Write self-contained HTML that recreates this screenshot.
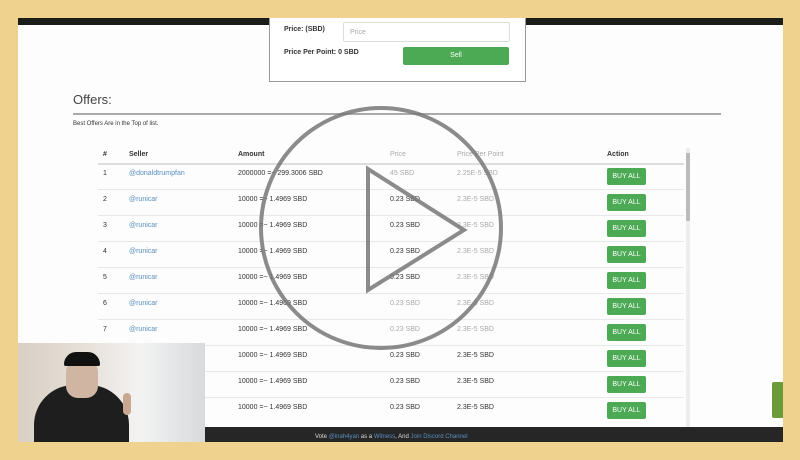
<!DOCTYPE html>
<html><head><style>
body{margin:0;width:800px;height:460px;background:#efd28e;font-family:"Liberation Sans",sans-serif;position:relative;overflow:hidden}
#scr{position:absolute;left:18px;top:18px;width:765px;height:424px;background:#fdfdfd;overflow:hidden}
.abs{position:absolute}
.t{font-size:7px;color:#333;position:absolute}
.btn{position:absolute;left:589px;width:39px;height:17px;background:#4caa55;color:#fff;font-size:7px;text-align:center;line-height:17px;border-radius:2px}
.ln{position:absolute;left:80px;width:586px;height:1px;background:#e8e8e8}
.blue{color:#5a8fc0}
.gray{color:#aaa}
</style></head><body>
<div id="scr">
<div class="abs" style="left:0;top:0;width:765px;height:7px;background:#1b1d1b"></div>
<div class="abs" style="left:251px;top:0;width:255px;height:63px;border:1px solid #999;border-top:none;background:#fff"></div>
<div class="t" style="left:266px;top:8px;font-weight:bold">Price: (SBD)</div>
<div class="abs" style="left:325px;top:4px;width:165px;height:18px;border:1px solid #ddd;border-radius:2px"></div>
<div class="t gray" style="left:332px;top:11px">Price</div>
<div class="t" style="left:266px;top:31px;font-weight:bold">Price Per Point: 0 SBD</div>
<div class="abs" style="left:385px;top:29px;width:106px;height:18px;background:#4caa55;border-radius:2px;color:#fff;font-size:7px;text-align:center;line-height:18px">Sell</div>
<div class="abs" style="left:55px;top:74px;font-size:13px;color:#444">Offers:</div>
<div class="abs" style="left:55px;top:95px;width:648px;height:2px;background:#aaa"></div>
<div class="t" style="left:55px;top:103px;font-size:6px">Best Offers Are in the Top of list.</div>
<div class="abs" style="left:668px;top:130px;width:4px;height:290px;background:#eee"></div>
<div class="abs" style="left:668px;top:135px;width:4px;height:68px;background:#bbb"></div>
<div class="t" style="left:85px;top:133px;font-weight:bold">#</div>
<div class="t" style="left:111px;top:133px;font-weight:bold">Seller</div>
<div class="t" style="left:220px;top:133px;font-weight:bold">Amount</div>
<div class="t gray" style="left:372px;top:133px">Price</div>
<div class="t gray" style="left:439px;top:133px">Price Per Point</div>
<div class="t" style="left:589px;top:133px;font-weight:bold">Action</div>
<div class="ln" style="top:145px;height:2px;background:#ddd"></div>
<!-- rows -->
<div class="t" style="left:85px;top:152px">1</div><div class="t blue" style="left:111px;top:152px">@donaldtrumpfan</div><div class="t" style="left:220px;top:152px">2000000 =~ 299.3006 SBD</div><div class="t gray" style="left:372px;top:152px">45 SBD</div><div class="t gray" style="left:439px;top:152px">2.25E-5 SBD</div><div class="btn" style="top:150px">BUY ALL</div><div class="ln" style="top:171px"></div>
<div class="t" style="left:85px;top:178px">2</div><div class="t blue" style="left:111px;top:178px">@runicar</div><div class="t" style="left:220px;top:178px">10000 =~ 1.4969 SBD</div><div class="t" style="left:372px;top:178px">0.23 SBD</div><div class="t gray" style="left:439px;top:178px">2.3E-5 SBD</div><div class="btn" style="top:176px">BUY ALL</div><div class="ln" style="top:197px"></div>
<div class="t" style="left:85px;top:204px">3</div><div class="t blue" style="left:111px;top:204px">@runicar</div><div class="t" style="left:220px;top:204px">10000 =~ 1.4969 SBD</div><div class="t" style="left:372px;top:204px">0.23 SBD</div><div class="t gray" style="left:439px;top:204px">2.3E-5 SBD</div><div class="btn" style="top:202px">BUY ALL</div><div class="ln" style="top:223px"></div>
<div class="t" style="left:85px;top:230px">4</div><div class="t blue" style="left:111px;top:230px">@runicar</div><div class="t" style="left:220px;top:230px">10000 =~ 1.4969 SBD</div><div class="t" style="left:372px;top:230px">0.23 SBD</div><div class="t gray" style="left:439px;top:230px">2.3E-5 SBD</div><div class="btn" style="top:228px">BUY ALL</div><div class="ln" style="top:249px"></div>
<div class="t" style="left:85px;top:256px">5</div><div class="t blue" style="left:111px;top:256px">@runicar</div><div class="t" style="left:220px;top:256px">10000 =~ 1.4969 SBD</div><div class="t" style="left:372px;top:256px">0.23 SBD</div><div class="t gray" style="left:439px;top:256px">2.3E-5 SBD</div><div class="btn" style="top:254px">BUY ALL</div><div class="ln" style="top:275px"></div>
<div class="t" style="left:85px;top:282px">6</div><div class="t blue" style="left:111px;top:282px">@runicar</div><div class="t" style="left:220px;top:282px">10000 =~ 1.4969 SBD</div><div class="t gray" style="left:372px;top:282px">0.23 SBD</div><div class="t gray" style="left:439px;top:282px">2.3E-5 SBD</div><div class="btn" style="top:280px">BUY ALL</div><div class="ln" style="top:301px"></div>
<div class="t" style="left:85px;top:308px">7</div><div class="t blue" style="left:111px;top:308px">@runicar</div><div class="t" style="left:220px;top:308px">10000 =~ 1.4969 SBD</div><div class="t gray" style="left:372px;top:308px">0.23 SBD</div><div class="t gray" style="left:439px;top:308px">2.3E-5 SBD</div><div class="btn" style="top:306px">BUY ALL</div><div class="ln" style="top:327px"></div>
<div class="t" style="left:220px;top:334px">10000 =~ 1.4969 SBD</div><div class="t" style="left:372px;top:334px">0.23 SBD</div><div class="t" style="left:439px;top:334px">2.3E-5 SBD</div><div class="btn" style="top:332px">BUY ALL</div><div class="ln" style="top:353px"></div>
<div class="t" style="left:220px;top:360px">10000 =~ 1.4969 SBD</div><div class="t" style="left:372px;top:360px">0.23 SBD</div><div class="t" style="left:439px;top:360px">2.3E-5 SBD</div><div class="btn" style="top:358px">BUY ALL</div><div class="ln" style="top:379px"></div>
<div class="t" style="left:220px;top:386px">10000 =~ 1.4969 SBD</div><div class="t" style="left:372px;top:386px">0.23 SBD</div><div class="t" style="left:439px;top:386px">2.3E-5 SBD</div><div class="btn" style="top:384px">BUY ALL</div>
<div class="abs" style="left:0;top:409px;width:765px;height:15px;background:#262626"></div>
<div class="t" style="left:297px;top:416px;color:#ddd;font-size:6px">Vote <span class="blue">@inah4yan</span> as a <span class="blue">Witness</span>, And <span class="blue">Join Discord Channel</span></div>
<div class="abs" style="left:754px;top:364px;width:11px;height:36px;background:#6a9a3a;border-radius:2px 0 0 2px"></div>
<!-- webcam -->
<div class="abs" style="left:0;top:325px;width:187px;height:99px;background:linear-gradient(90deg,#d9cfc4 0%,#e8e2db 40%,#f3f3f3 65%,#d8dadc 100%)"></div>
<div class="abs" style="left:16px;top:367px;width:95px;height:57px;background:#1e1e1e;border-radius:40px 40px 0 0"></div>
<div class="abs" style="left:48px;top:342px;width:32px;height:38px;background:#cfb5a2;border-radius:12px"></div>
<div class="abs" style="left:46px;top:334px;width:36px;height:14px;background:#111;border-radius:14px 14px 2px 2px"></div>
<div class="abs" style="left:105px;top:375px;width:8px;height:22px;background:#c9a893;border-radius:4px"></div>
</div>
<svg class="abs" style="left:0;top:0" width="800" height="460">
<circle cx="381" cy="228" r="120" fill="none" stroke="#777" stroke-width="4" opacity="0.85"/>
<path d="M368 169 L368 290 L464 230 Z" fill="none" stroke="#777" stroke-width="4" stroke-linejoin="miter" opacity="0.85"/>
</svg>
</body></html>
